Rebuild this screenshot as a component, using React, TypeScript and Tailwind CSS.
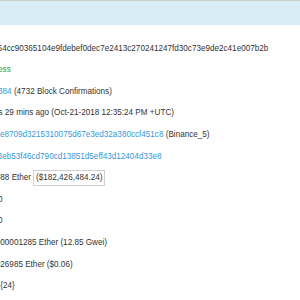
import React from "react";

const link = "text-[#3498db]";

const rows: { key: string; value: React.ReactNode }[] = [
  { key: "hash", value: <span>0x9a54cc90365104e9fdebef0dec7e2413c270241247fd30c73e9de2c41e007b2b</span> },
  { key: "status", value: <span className="text-[#2e9a2e]">Success</span> },
  {
    key: "block",
    value: (
      <span>
        <span className={link}>6554384</span> (4732 Block Confirmations)
      </span>
    ),
  },
  { key: "time", value: <span>18 hrs 29 mins ago (Oct-21-2018 12:35:24 PM +UTC)</span> },
  {
    key: "from",
    value: (
      <span>
        <span className={link}>0xfe9e8709d3215310075d67e3ed32a380ccf451c8</span> (Binance_5)
      </span>
    ),
  },
  { key: "to", value: <span className={link}>0x2d3eb53f46cd790cd13851d5eff43d12404d33e8</span> },
  {
    key: "value",
    value: (
      <span className="flex items-center">
        <span>889,888 Ether</span>
        <span className="ml-[2px] border border-[#cfcfcf] px-[2px] py-[3px] leading-none">($182,426,484.24)</span>
      </span>
    ),
  },
  { key: "gaslimit", value: <span>21000</span> },
  { key: "gasused", value: <span>21000</span> },
  { key: "gasprice", value: <span>0.00000001285 Ether (12.85 Gwei)</span> },
  { key: "fee", value: <span>0.00026985 Ether ($0.06)</span> },
  { key: "nonce", value: <span>171 | {"{24}"}</span> },
];

export default function App() {
  return (
    <div className="w-[300px] h-[300px] overflow-hidden bg-white text-[#333] text-[8.15px] font-['Liberation_Sans',Arial,sans-serif]">
      <div className="h-[25px] border-t border-[#cccccc] bg-[#d9edf7]" />
      <div className="pt-[13px] -ml-[20px]">
        {rows.map((r) => (
          <div key={r.key} className="h-[21.6px] flex items-center whitespace-nowrap">
            {r.value}
          </div>
        ))}
      </div>
    </div>
  );
}
